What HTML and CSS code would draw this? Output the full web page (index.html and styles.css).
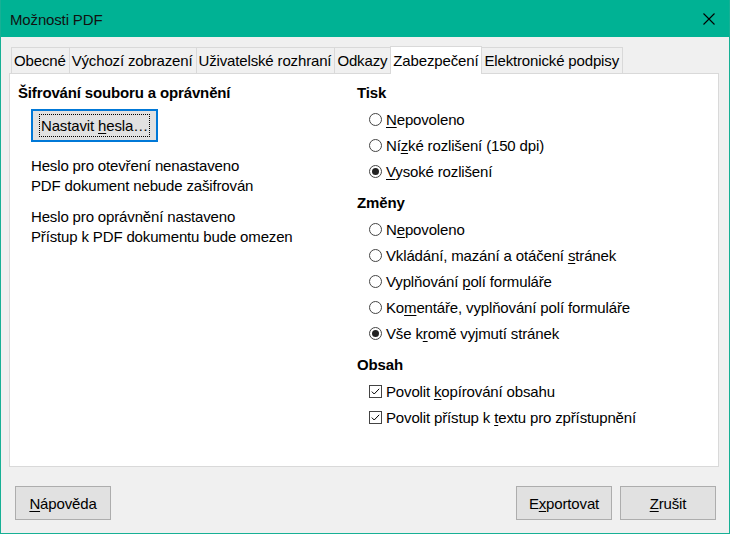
FILE: index.html
```html
<!DOCTYPE html>
<html lang="cs">
<head>
<meta charset="utf-8">
<title>Možnosti PDF</title>
<link rel="stylesheet" href="styles.css">
</head>
<body>
<div class="window">
  <div class="titlebar">
    <span class="title">Možnosti PDF</span>
    <svg class="close" width="12" height="12" viewBox="0 0 12 12"><path d="M0.5 0.5 L11.5 11.5 M11.5 0.5 L0.5 11.5" stroke="#000" stroke-width="1.1" fill="none"/></svg>
  </div>
  <div class="main">
    <div class="tabs">
      <div class="tab">Obecné</div>
      <div class="tab">Výchozí zobrazení</div>
      <div class="tab">Uživatelské rozhraní</div>
      <div class="tab">Odkazy</div>
      <div class="tab active">Zabezpečení</div>
      <div class="tab">Elektronické podpisy</div>
    </div>
    <div class="panel">
      <div class="col-left">
        <div class="heading">Šifrování souboru a oprávnění</div>
        <div class="indent">
          <button class="btn btn-focus"><span class="focus">Nastavit <u>h</u>esla…</span></button>
          <div class="info info-first">Heslo pro otevření nenastaveno<br>PDF dokument nebude zašifrován</div>
          <div class="info">Heslo pro oprávnění nastaveno<br>Přístup k PDF dokumentu bude omezen</div>
        </div>
      </div>
      <div class="col-right">
        <div class="heading">Tisk</div>
        <div class="opts">
          <div class="opt"><span class="radio"></span><span><u>N</u>epovoleno</span></div>
          <div class="opt"><span class="radio"></span><span>Ní<u>z</u>ké rozlišení (150 dpi)</span></div>
          <div class="opt"><span class="radio checked"></span><span><u>V</u>ysoké rozlišení</span></div>
        </div>
        <div class="heading section">Změny</div>
        <div class="opts">
          <div class="opt"><span class="radio"></span><span>N<u>e</u>povoleno</span></div>
          <div class="opt"><span class="radio"></span><span>Vkládání, mazání a otáčení <u>s</u>tránek</span></div>
          <div class="opt"><span class="radio"></span><span>Vyplňování <u>p</u>olí formuláře</span></div>
          <div class="opt"><span class="radio"></span><span>Ko<u>m</u>entáře, vyplňování polí formuláře</span></div>
          <div class="opt"><span class="radio checked"></span><span>Vše k<u>r</u>omě vyjmutí stránek</span></div>
        </div>
        <div class="heading section">Obsah</div>
        <div class="opts">
          <div class="opt"><svg class="check" width="13" height="13" viewBox="0 0 13 13"><rect x="0.5" y="0.5" width="12" height="12" fill="#fff" stroke="#444"/><path d="M2.8 6.6 L5.2 9 L10.2 3.8" fill="none" stroke="#000" stroke-width="1"/></svg><span>Povolit <u>k</u>opírování obsahu</span></div>
          <div class="opt"><svg class="check" width="13" height="13" viewBox="0 0 13 13"><rect x="0.5" y="0.5" width="12" height="12" fill="#fff" stroke="#444"/><path d="M2.8 6.6 L5.2 9 L10.2 3.8" fill="none" stroke="#000" stroke-width="1"/></svg><span>Povolit přístup k <u>t</u>extu pro zpřístupnění</span></div>
        </div>
      </div>
    </div>
  </div>
  <div class="footer">
    <button class="btn"><u>N</u>ápověda</button>
    <div class="spacer"></div>
    <button class="btn">E<u>x</u>portovat</button>
    <button class="btn"><u>Z</u>rušit</button>
  </div>
</div>
</body>
</html>
```

FILE: styles.css
```css
html, body {
  margin: 0;
  padding: 0;
  width: 730px;
  height: 534px;
  overflow: hidden;
}
body {
  font-family: "Liberation Sans", Arial, sans-serif;
  font-size: 15px;
  letter-spacing: -0.15px;
  color: #000;
  background: #f0f0f0;
}
u {
  text-decoration: underline;
  text-decoration-thickness: 1px;
  text-underline-offset: 2px;
}
.window {
  box-sizing: border-box;
  width: 730px;
  height: 534px;
  border: 1px solid #17b095;
  border-top: none;
  display: flex;
  flex-direction: column;
  background: #f0f0f0;
}
.titlebar {
  height: 37px;
  flex: none;
  background: #00b294;
  display: flex;
  align-items: center;
  justify-content: space-between;
  padding: 0 14px 0 9px;
  color: #111;
}
.title {
  font-size: 15px;
  padding-top: 2px;
}
.close {
  display: block;
}
.main {
  flex: none;
  display: flex;
  flex-direction: column;
  padding: 9px 10px 0 8px;
}
.tabs {
  display: flex;
  align-items: flex-end;
  height: 27px;
  padding-left: 2px;
}
.tab {
  box-sizing: border-box;
  height: 26px;
  line-height: 25px;
  padding: 0 3px 0 2px;
  border: 1px solid #d9d9d9;
  border-bottom: none;
  margin-left: -1px;
  background: #f0f0f0;
  white-space: nowrap;
}
.tab:first-child {
  margin-left: 0;
}
.tab.active {
  height: 28px;
  line-height: 27px;
  margin-bottom: -1px;
  background: #fff;
  position: relative;
  z-index: 1;
}
.panel {
  box-sizing: border-box;
  height: 394px;
  border: 1px solid #d9d9d9;
  background: #fff;
  display: grid;
  grid-template-columns: 339px 1fr;
  padding: 9px 8px 0 8px;
  align-content: start;
}
.heading {
  font-weight: bold;
  line-height: 20px;
  height: 20px;
}
.heading.section {
  margin-top: 9px;
}
.indent {
  padding-left: 13px;
  padding-top: 6px;
}
.btn {
  box-sizing: border-box;
  font-family: inherit;
  font-size: 15px;
  letter-spacing: -0.15px;
  color: #000;
  background: #e1e1e1;
  border: 1px solid #adadad;
  width: 96px;
  height: 34px;
  padding: 0;
  margin: 0;
}
.btn-focus {
  width: 127px;
  height: 33px;
  border: 2px solid #0078d7;
  display: flex;
  align-items: center;
  justify-content: center;
}
.focus {
  outline: 1px dotted #000;
  outline-offset: 0;
  padding: 1px 1px;
  line-height: 19px;
}
.info {
  line-height: 20px;
  margin-top: 11px;
}
.info-first {
  margin-top: 14px;
}
.opts {
  padding-top: 3px;
}
.opt {
  display: flex;
  align-items: center;
  height: 26px;
  padding-left: 12px;
  white-space: nowrap;
}
.radio {
  box-sizing: border-box;
  width: 13px;
  height: 13px;
  border: 1px solid #444;
  border-radius: 50%;
  background: #fff;
  margin-right: 4px;
  flex: none;
  position: relative;
}
.radio.checked::after {
  content: "";
  position: absolute;
  left: 2px;
  top: 2px;
  width: 7px;
  height: 7px;
  border-radius: 50%;
  background: #222;
}
.check {
  flex: none;
  margin-right: 4px;
  display: block;
}
.footer {
  flex: 1;
  display: flex;
  align-items: flex-start;
  gap: 8px;
  padding: 19px 13px 0 14px;
}
.spacer {
  flex: 1;
}
```
